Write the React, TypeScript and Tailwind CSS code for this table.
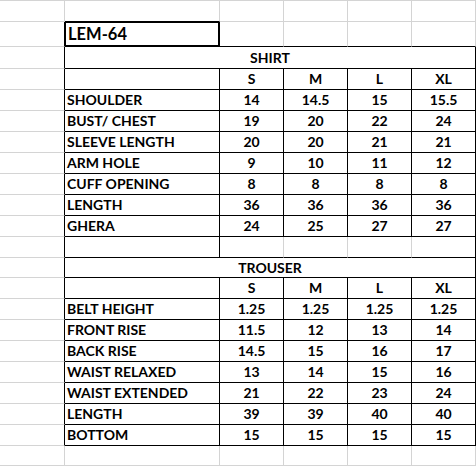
import React from "react";

type B = "g" | "b";

const shirt = [
  ["SHOULDER", "14", "14.5", "15", "15.5"],
  ["BUST/ CHEST", "19", "20", "22", "24"],
  ["SLEEVE LENGTH", "20", "20", "21", "21"],
  ["ARM HOLE", "9", "10", "11", "12"],
  ["CUFF OPENING", "8", "8", "8", "8"],
  ["LENGTH", "36", "36", "36", "36"],
  ["GHERA", "24", "25", "27", "27"],
];

const trouser = [
  ["BELT HEIGHT", "1.25", "1.25", "1.25", "1.25"],
  ["FRONT RISE", "11.5", "12", "13", "14"],
  ["BACK RISE", "14.5", "15", "16", "17"],
  ["WAIST RELAXED", "13", "14", "15", "16"],
  ["WAIST EXTENDED", "21", "22", "23", "24"],
  ["LENGTH", "39", "39", "40", "40"],
  ["BOTTOM", "15", "15", "15", "15"],
];

type W = "a" | "b" | "c" | "m";

function Cell({
  w,
  rb,
  bb,
  center,
  extra,
  children,
}: {
  w: W;
  rb: B;
  bb: B;
  center?: boolean;
  extra?: string;
  children?: React.ReactNode;
}) {
  const wc =
    w === "a" ? "w-[65px]" : w === "b" ? "w-[155px]" : w === "c" ? "w-[64px]" : "w-[411px]";
  const rc = rb === "b" ? "border-r-black" : "border-r-[#d4d4d4]";
  const bc = bb === "b" ? "border-b-black" : "border-b-[#d4d4d4]";
  return (
    <div
      className={`${wc} h-full shrink-0 border-r border-b ${rc} ${bc} flex items-end ${
        center ? "justify-center" : "justify-start pl-[2px]"
      } ${extra ?? ""}`}
    >
      {children !== undefined && children !== "" ? (
        <span className="leading-[20px] whitespace-nowrap">{children}</span>
      ) : null}
    </div>
  );
}

function DataRows({ rows }: { rows: string[][] }) {
  return (
    <>
      {rows.map((r, i) => (
        <div key={i} className="flex h-[21px]">
          <Cell w="a" rb="b" bb="g" />
          <Cell w="b" rb="b" bb="b">
            {r[0]}
          </Cell>
          {r.slice(1).map((v, j) => (
            <Cell key={j} w="c" rb="b" bb="b" center>
              {v}
            </Cell>
          ))}
        </div>
      ))}
    </>
  );
}

function SizeRow() {
  return (
    <div className="flex h-[21px]">
      <Cell w="a" rb="b" bb="g" />
      <Cell w="b" rb="b" bb="b" />
      {["S", "M", "L", "XL"].map((s) => (
        <Cell key={s} w="c" rb="b" bb="b" center>
          {s}
        </Cell>
      ))}
    </div>
  );
}

export default function App() {
  return (
    <div className="w-[476px] h-[466px] overflow-hidden bg-white border-t border-t-[#d4d4d4] font-['Lato',sans-serif] text-[14px] font-bold text-black">
      {/* row 1 */}
      <div className="flex h-[21px]">
        <Cell w="a" rb="g" bb="g" />
        <Cell w="b" rb="g" bb="b" />
        <Cell w="c" rb="g" bb="g" />
        <Cell w="c" rb="g" bb="g" />
        <Cell w="c" rb="g" bb="g" />
        <Cell w="c" rb="g" bb="g" />
      </div>
      {/* row 2 LEM-64 */}
      <div className="flex h-[25px]">
        <Cell w="a" rb="b" bb="g" />
        <div className="w-[155px] h-full shrink-0 border-r border-b border-r-black border-b-black shadow-[inset_1px_1px_0_0_#000,inset_-1px_-1px_0_0_#000] flex items-end pl-[3px] pb-[2px]">
          <span className="text-[16.5px] leading-[20px]">LEM-64</span>
        </div>
        <Cell w="c" rb="g" bb="b" />
        <Cell w="c" rb="g" bb="b" />
        <Cell w="c" rb="g" bb="b" />
        <Cell w="c" rb="g" bb="b" />
      </div>
      {/* SHIRT */}
      <div className="flex h-[22px]">
        <Cell w="a" rb="b" bb="g" />
        <Cell w="m" rb="b" bb="b" center>
          SHIRT
        </Cell>
      </div>
      <SizeRow />
      <DataRows rows={shirt} />
      {/* empty row */}
      <div className="flex h-[21px]">
        <Cell w="a" rb="b" bb="g" />
        <Cell w="b" rb="b" bb="b" />
        <Cell w="c" rb="g" bb="b" />
        <Cell w="c" rb="g" bb="b" />
        <Cell w="c" rb="g" bb="b" />
        <Cell w="c" rb="b" bb="b" />
      </div>
      {/* TROUSER */}
      <div className="flex h-[20px]">
        <Cell w="a" rb="b" bb="g" />
        <Cell w="m" rb="b" bb="b" center extra="[&>span]:leading-[19px]">
          TROUSER
        </Cell>
      </div>
      <SizeRow />
      <DataRows rows={trouser} />
      {/* last row */}
      <div className="flex h-[20px]">
        <Cell w="a" rb="g" bb="g" />
        <Cell w="b" rb="g" bb="g" />
        <Cell w="c" rb="g" bb="g" />
        <Cell w="c" rb="g" bb="g" />
        <Cell w="c" rb="g" bb="g" />
        <Cell w="c" rb="g" bb="g" />
      </div>
    </div>
  );
}
